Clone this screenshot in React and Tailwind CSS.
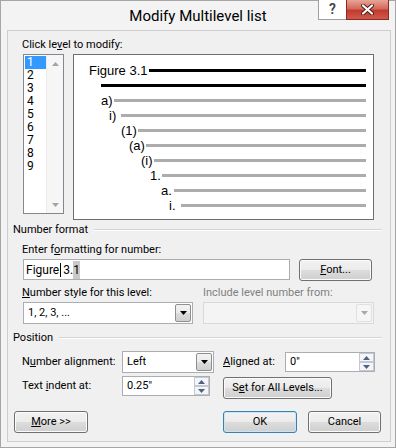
import clsx from "clsx";

const ui = "font-[Roboto,'Liberation_Sans',sans-serif]";

const previewRows = [
  { label: "Figure 3.1", pad: "pl-[15px]", lw: "w-[60px]", dark: true },
  { label: "", pad: "pl-[27px]", lw: "w-0", dark: true },
  { label: "a)", pad: "pl-[27px]", lw: "w-[13px]" },
  { label: "i)", pad: "pl-[35px]", lw: "w-[12px]" },
  { label: "(1)", pad: "pl-[47px]", lw: "w-[17px]" },
  { label: "(a)", pad: "pl-[55px]", lw: "w-[17px]" },
  { label: "(i)", pad: "pl-[67px]", lw: "w-[13px]" },
  { label: "1.", pad: "pl-[76px]", lw: "w-[12px]" },
  { label: "a.", pad: "pl-[87px]", lw: "w-[13px]" },
  { label: "i.", pad: "pl-[95px]", lw: "w-[12px]" },
];

function Arrow({ up, color = "#000" }) {
  return (
    <svg width="7" height="4" viewBox="0 0 7 4">
      <path d={up ? "M0 4h7L3.5 0z" : "M0 0h7L3.5 4z"} fill={color} />
    </svg>
  );
}

function Btn({ children, className, isDefault }) {
  return (
    <div
      className={clsx(
        "flex items-center justify-center h-[22px] rounded-[3px] border text-[11px] text-black bg-[linear-gradient(#f2f2f2_0%,#ebebeb_50%,#dddddd_50%,#cfcfcf_100%)]",
        isDefault
          ? "border-[#3c7fb1] shadow-[inset_0_0_0_1px_#c9e6f7]"
          : "border-[#707070] shadow-[inset_0_0_0_1px_#fbfbfb]",
        className
      )}
    >
      {children}
    </div>
  );
}

function Combo({ value, className, disabled }) {
  return (
    <div
      className={clsx(
        "flex h-[22px] border p-[1px]",
        disabled ? "bg-[#f4f4f4] border-[#d9d9d9]" : "bg-white border-[#abadb3]",
        className
      )}
    >
      <div className="flex-1 pl-[3px] flex items-center text-[11px]">{value}</div>
      <div
        className={clsx(
          "w-[16px] flex items-center justify-center border rounded-[2px]",
          disabled
            ? "border-[#e0e0e0] bg-[#f6f6f6]"
            : "border-[#8e8f8f] bg-[linear-gradient(#f2f2f2_0%,#ebebeb_50%,#dddddd_50%,#cfcfcf_100%)]"
        )}
      >
        <Arrow color={disabled ? "#a8a8a8" : "#000"} />
      </div>
    </div>
  );
}

function Spin({ value, className }) {
  return (
    <div className={clsx("flex h-[20px] border border-[#abadb3] bg-white", className)}>
      <div className="flex-1 pl-[4px] flex items-center text-[11px]">{value}</div>
      <div className="w-[15px] flex flex-col">
        <div className="h-[9px] flex items-center justify-center border border-[#c4c9d1] bg-[#f3f5f8]">
          <Arrow up color="#4d6185" />
        </div>
        <div className="h-[9px] flex items-center justify-center border border-[#c4c9d1] bg-[#f3f5f8]">
          <Arrow color="#4d6185" />
        </div>
      </div>
    </div>
  );
}

function Section({ title, className }) {
  return (
    <div className={clsx("flex items-center h-[14px] ml-[5px] mr-[8px]", className)}>
      <span className="text-[11px] leading-[14px]">{title}</span>
      <div className="flex-1 ml-[6px] h-[2px] border-t border-[#d5d5d5] border-b border-b-white" />
    </div>
  );
}

export default function App() {
  return (
    <div className={clsx("w-[396px] h-[448px] bg-[#f3f3f3] border border-[#a6a6a6] flex flex-col text-black", ui)}>
      <div className="relative h-[29px] flex items-center justify-center pt-[2px]">
        <span className="text-[15px]">Modify Multilevel list</span>
        <div className="absolute -top-[1px] right-[6px] flex h-[20px]">
          <div className="w-[28px] flex items-center justify-center border border-t-0 border-r-0 border-[#a0a0a0] bg-white text-[14px] text-[#444] font-semibold">
            ?
          </div>
          <div className="w-[43px] flex items-center justify-center border border-t-0 border-[#8a2a22] bg-[linear-gradient(#e8a597_0%,#d46a5c_45%,#c23b2f_55%,#cf5a4a_100%)]">
            <svg width="13" height="11" viewBox="0 0 13 11">
              <path d="M2 1.5l9 8M11 1.5l-9 8" stroke="#4a1b15" strokeWidth="4" strokeLinecap="round" />
              <path d="M2 1.5l9 8M11 1.5l-9 8" stroke="#fff" strokeWidth="2.2" strokeLinecap="round" />
            </svg>
          </div>
        </div>
      </div>

      <div className="ml-[6px] w-[384px] h-[412px] border border-[#cdcdcd] bg-[#f0f0f0] flex flex-col">
        <div className="mt-[7px] ml-[14px] h-[14px] text-[11px] leading-[14px]">
          Click le<u>v</u>el to modify:
        </div>

        <div className="mt-[2px] ml-[15px] flex items-start">
          <div className="w-[41px] h-[160px] border border-[#828790] bg-white flex">
            <div className="w-[22px] pt-[1px] pl-[1px]">
              {["1", "2", "3", "4", "5", "6", "7", "8", "9"].map((n, i) => (
                <div
                  key={n}
                  className={clsx(
                    "h-[13px] pl-[2px] text-[12px] leading-[13px]",
                    i === 0 && "bg-[#3399ff] text-white"
                  )}
                >
                  {n}
                </div>
              ))}
            </div>
            <div className="w-[17px] bg-[#f6f6f6] border-l border-[#ececec] flex flex-col justify-between">
              <div className="h-[17px] flex items-center justify-center">
                <Arrow up color="#a3a3a3" />
              </div>
              <div className="h-[17px] flex items-center justify-center">
                <Arrow color="#a3a3a3" />
              </div>
            </div>
          </div>

          <div className="ml-[9px] w-[301px] h-[166px] border border-[#6e6e6e] bg-white pt-[8px] pr-[7px] text-black font-['Liberation_Sans',Arial,sans-serif]">
            {previewRows.map((r, i) => (
              <div key={i} className={clsx("h-[15px] flex items-center", r.pad)}>
                <span className={clsx("text-[13px] leading-[15px] whitespace-nowrap", r.lw)}>{r.label}</span>
                <div className={clsx("flex-1 h-[3px]", r.dark ? "bg-black" : "bg-[#acacac]")} />
              </div>
            ))}
          </div>
        </div>

        <Section title="Number format" className="mt-[3px]" />

        <div className="mt-[6px] ml-[14px] h-[14px] text-[11px] leading-[14px]">
          Enter f<u>o</u>rmatting for number:
        </div>

        <div className="mt-[2px] ml-[15px] flex items-start">
          <div className="w-[267px] h-[21px] border border-[#abadb3] bg-white flex items-center pl-[2px] text-[12px]">
            <span>Figure</span>
            <span className="w-[1px] h-[14px] bg-black ml-[1px] mr-[2px]" />
            <span>3.</span>
            <span className="bg-[#c9c9c9]">1</span>
          </div>
          <Btn className="ml-[9px] w-[73px]">
            <span>
              <u>F</u>ont...
            </span>
          </Btn>
        </div>

        <div className="mt-[5px] ml-[14px] grid grid-cols-[171px_171px] gap-x-[10px]">
          <div className="h-[14px] text-[11px] leading-[14px]">
            <u>N</u>umber style for this level:
          </div>
          <div className="h-[14px] text-[11px] leading-[14px] text-[#7f7f7f]">Include level number from:</div>
          <Combo value="1, 2, 3, ..." className="mt-[2px] ml-[1px]" />
          <Combo value="" disabled className="mt-[2px]" />
        </div>

        <Section title="Position" className="mt-[7px]" />

        <div className="mt-[6px] ml-[14px] flex items-center">
          <div className="w-[100px] text-[11px]">
            N<u>u</u>mber alignment:
          </div>
          <Combo value="Left" className="w-[92px]" />
          <div className="ml-[9px] w-[62px] text-[11px]">
            <u>A</u>ligned at:
          </div>
          <Spin value='0"' className="w-[90px]" />
        </div>

        <div className="mt-[3px] ml-[14px] flex items-start">
          <div className="w-[100px] h-[20px] flex items-center text-[11px]">
            <span>
              Text <u>i</u>ndent at:
            </span>
          </div>
          <Spin value='0.25"' className="w-[88px]" />
          <Btn className="ml-[13px] mt-[1px] w-[109px] h-[21px]">
            <span>
              S<u>e</u>t for All Levels...
            </span>
          </Btn>
        </div>

        <div className="mt-[12px] ml-[6px] flex items-center">
          <Btn className="w-[74px]">
            <span>
              <u>M</u>ore &gt;&gt;
            </span>
          </Btn>
          <Btn isDefault className="ml-[135px] w-[74px]">
            OK
          </Btn>
          <Btn className="ml-[11px] w-[73px]">Cancel</Btn>
        </div>
      </div>
    </div>
  );
}
